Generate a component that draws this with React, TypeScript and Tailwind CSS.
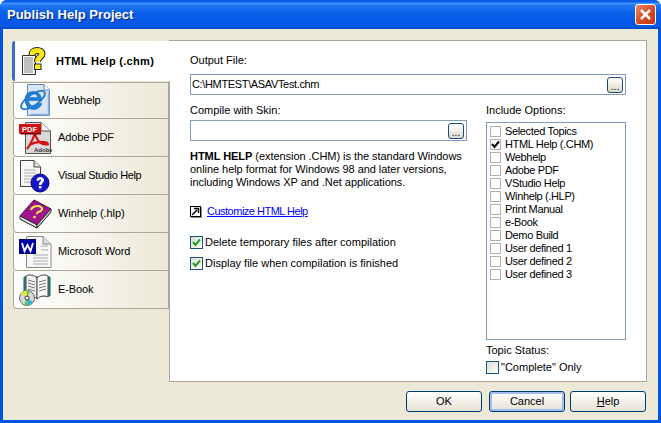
import React from "react";

const HtmlIcon = () => (
  <svg width="32" height="32" viewBox="0 0 32 32">
    <path d="M0.500 10.500H13.500V29.500H0.500Z" fill="#f6f6f6" stroke="#333" />
    <path d="M2 13h9M2 15h9M2 17h9M2 19h9M2 21h9M2 23h9M2 25h9M2 27h9" stroke="#888" strokeWidth="1" />
    <path d="M10 10C10 7 12 5.500 15 5.500C18 5.500 20 6.800 20 9C20 12 15.500 12 15.500 17" fill="none" stroke="#222" strokeWidth="7" />
    <rect x="12.500" y="19" width="6.500" height="5.500" fill="#ffe81a" stroke="#222" strokeWidth="1" />
    <path d="M10 10C10 7 12 5.500 15 5.500C18 5.500 20 6.800 20 9C20 12 15.500 12 15.500 17" fill="none" stroke="#ffe81a" strokeWidth="5" />
  </svg>
);

const IeIcon = () => (
  <svg width="32" height="33" viewBox="0 0 32 33">
    <path d="M8.500 0.500H25L30.500 6V31.500H8.500Z" fill="#d7e6f7" stroke="#5f86b8" />
    <path d="M25 0.500V6H30.500" fill="#fff" stroke="#5f86b8" />
    <path d="M29.500 8V30.500H11" fill="none" stroke="#8fb0dc" strokeWidth="1.500" />
    <ellipse cx="14" cy="16" rx="14" ry="5.500" fill="none" stroke="#2e80d0" strokeWidth="2" transform="rotate(-35 14 16)" />
    <path d="M6 15.500C6 10 10 7.500 14.500 7.500C19 7.500 22.500 10.500 22.500 16.500H9.500C9.800 20 12 22 15 22C17 22 18.500 21 19.500 19.500H23C21.500 23 18.500 25.500 14.500 25.500C9.500 25.500 6 21.500 6 15.500ZM9.700 13.500H18.800C18.300 11 16.800 9.800 14.500 9.800C12 9.800 10.200 11.200 9.700 13.500Z" fill="#1f7fd6" fillRule="evenodd" stroke="#0f5fb0" strokeWidth="0.500" />
  </svg>
);

const PdfIcon = () => (
  <svg width="34" height="32" viewBox="0 0 34 32">
    <path d="M7.500 0.500H23L32.500 9V31.500H7.500Z" fill="#d9d9d9" stroke="#555" />
    <path d="M23 0.500V9H32.500" fill="#f3f3f3" stroke="#555" />
    <path d="M18 8C16 14 14 21 9 27M17 11C19 20 24 24 31 22M11 23C17 20 24 19 30 21" fill="none" stroke="#d21010" strokeWidth="2" />
    <rect x="1" y="2" width="22" height="9" fill="#d40d12" />
    <path d="M1 11H23V12.500H3Z" fill="#70070a" />
    <text x="4" y="9.500" fontFamily="Liberation Sans" fontSize="7.500" fontWeight="700" fill="#fff">PDF</text>
    <text x="16" y="30" fontFamily="Liberation Sans" fontSize="6" fontWeight="700" fill="#333">Adobe</text>
  </svg>
);

const VsIcon = () => (
  <svg width="32" height="34" viewBox="0 0 32 34">
    <path d="M1.500 1.500H15L21.500 8V27.500H1.500Z" fill="#f8f8f8" stroke="#444" />
    <path d="M15 1.500V8H21.500" fill="#ddd" stroke="#444" />
    <path d="M5 11h12M5 14h12M5 17h12M5 20h10M5 23h8" stroke="#aaa" />
    <circle cx="21" cy="24" r="9" fill="#1414c8" stroke="#0a0a70" />
    <path d="M17.500 21.500C17.500 19.500 19 18 21.200 18C23.500 18 25 19.400 25 21.200C25 23.500 22.500 23.800 22.500 26H19.800C19.800 23 22 22.800 22 21.300C22 20.700 21.700 20.400 21.200 20.400C20.600 20.400 20.300 20.900 20.300 21.700Z" fill="#fff" />
    <rect x="19.800" y="27" width="2.700" height="2.500" fill="#fff" />
  </svg>
);

const BookIcon = () => (
  <svg width="33" height="30" viewBox="0 0 33 30">
    <path d="M1 20L18 29L32 13L18 6Z" fill="#f5f5f5" stroke="#333" />
    <path d="M1 17L15 1L32 10L18 26Z" fill="#a1158f" stroke="#3a0a3a" />
    <path d="M1 17L18 26V29L1 20Z" fill="#e8e8e8" stroke="#333" />
    <path d="M18 26L32 10V13L18 29Z" fill="#d8d8d8" stroke="#333" />
    <path d="M12 11C13 7 19 6 22 8C24.500 10 22 12.500 19 13L17.500 15" fill="none" stroke="#ffee44" strokeWidth="2" />
    <circle cx="15.500" cy="18" r="1.300" fill="#ffee44" />
  </svg>
);

const WordIcon = () => (
  <svg width="33" height="32" viewBox="0 0 33 32">
    <path d="M7.500 0.500H24L32 8V31.500H7.500Z" fill="#f7f7f7" stroke="#888" />
    <path d="M24 0.500V8H32" fill="#ddd" stroke="#888" />
    <path d="M22 10h7M22 14h7M14 19h15M14 22h15M14 25h15M14 28h15" stroke="#aaa" />
    <rect x="0.500" y="3.500" width="16" height="14" fill="#0000a8" stroke="#00006a" strokeWidth="1" />
    <path d="M3 7L5.500 15L8.500 9L11.500 15L14 7" fill="none" stroke="#fff" strokeWidth="1.800" />
  </svg>
);

const EbookIcon = () => (
  <svg width="33" height="33" viewBox="0 0 33 33">
    <path d="M5 4H31V23H5Z" fill="#3a8a8a" stroke="#205a5a" />
    <path d="M7 3C11 1 15 2 18 5V26C15 23 11 22 7 24Z" fill="#f1f1f1" stroke="#444" />
    <path d="M18 5C21 2 25 1 29 3V24C25 22 21 23 18 26Z" fill="#fafafa" stroke="#444" />
    <path d="M9 7l7 2M9 10l7 2M9 13l7 2M9 16l7 2M20 9l7-2M20 12l7-2M20 15l7-2M20 18l7-2" stroke="#777" />
    <circle cx="8" cy="25" r="7.500" fill="#d9d9d9" stroke="#666" />
    <path d="M8 25L2 21A7.500 7.500 0 0 1 8 17.500Z" fill="#e8e83c" />
    <path d="M8 25L14 29A7.500 7.500 0 0 1 9 32.500Z" fill="#29b6d8" />
    <path d="M8 25L8 17.500A7.500 7.500 0 0 1 11 18Z" fill="#58c858" />
    <path d="M8 25L9 32.500L5 32Z" fill="#58c858" />
    <circle cx="8" cy="25" r="2" fill="#fff" stroke="#333" />
  </svg>
);

const tabs = [
  { name: "Webhelp", icon: <IeIcon />, h: "h-[36px]", t: "tracking-[-0.1px]" },
  { name: "Adobe PDF", icon: <PdfIcon />, h: "h-[38px]", t: "tracking-[-0.1px]" },
  { name: "Visual Studio Help", icon: <VsIcon />, h: "h-[38px]", t: "tracking-[-0.35px]" },
  { name: "Winhelp (.hlp)", icon: <BookIcon />, h: "h-[38px]", t: "tracking-[-0.1px]" },
  { name: "Microsoft Word", icon: <WordIcon />, h: "h-[38px]", t: "tracking-[-0.1px]" },
  { name: "E-Book", icon: <EbookIcon />, h: "h-[38px]", t: "tracking-[-0.1px]" },
];

const options = [
  "Selected Topics",
  "HTML Help (.CHM)",
  "Webhelp",
  "Adobe PDF",
  "VStudio Help",
  "Winhelp (.HLP)",
  "Print Manual",
  "e-Book",
  "Demo Build",
  "User defined 1",
  "User defined 2",
  "User defined 3",
];

const Browse = () => (
  <div className="w-[16px] h-[16px] rounded-[3px] border border-[#1c4a7c] bg-gradient-to-b from-white to-[#dcd8c8] flex items-end justify-center text-[10px] leading-[11px] text-black shrink-0">
    ...
  </div>
);

const XpCheck = ({ label }: { label: string }) => (
  <div className="flex items-center gap-[2px] h-[13px]">
    <div className="w-[13px] h-[13px] border border-[#1c5180] bg-gradient-to-br from-[#dcdcd4] to-white flex items-center justify-center shrink-0">
      <svg width="9" height="9" viewBox="0 0 9 9">
        <path d="M1 4L3.500 7L8 1.500" fill="none" stroke="#21a121" strokeWidth="2" />
      </svg>
    </div>
    <span>{label}</span>
  </div>
);

const XpButton = ({ children, wide, def }: { children: React.ReactNode; wide: string; def?: boolean }) => (
  <div
    className={`${wide} h-[21px] rounded-[3px] border border-[#003c74] bg-gradient-to-b from-white to-[#e6e2d4] flex items-center justify-center ${
      def ? "shadow-[inset_0_0_0_2px_#a4bdec]" : ""
    }`}
  >
    {children}
  </div>
);

export default function App() {
  return (
    <div className="w-[661px] h-[423px] overflow-hidden bg-[#0054e3] rounded-t-[7px] flex flex-col font-['Liberation_Sans',sans-serif] text-[11px] leading-[13px] text-black">
      <div className="h-[29px] shrink-0 pl-[7px] pr-[5px] flex items-center justify-between bg-[linear-gradient(180deg,#0a5ae0_0%,#0a5ff0_6%,#3f94fb_12%,#1f74f4_20%,#0a5fe8_45%,#0558e6_80%,#0a5ae8_90%,#0048c8_100%)]">
        <span className="text-white font-bold text-[13px] [text-shadow:1px_1px_#0a2a80] -mt-[1px]">Publish Help Project</span>
        <div className="w-[21px] h-[21px] rounded-[3px] border border-white bg-[linear-gradient(135deg,#eb8a6a,#d6491f_55%,#c03a18)] flex items-center justify-center">
          <svg width="13" height="13" viewBox="0 0 13 13">
            <path d="M2 2L11 11M11 2L2 11" stroke="#fff" strokeWidth="2.500" />
          </svg>
        </div>
      </div>

      <div className="flex-1 mx-[3px] mb-[3px] bg-[#ece9d8] flex flex-col min-h-0">
        <div className="flex pl-[9px] pr-[12px] pt-[11px]">
          <div className="w-[158px] shrink-0 relative z-10 -mr-[1px] pt-[1px]">
            <div className="h-[40px] bg-white border-l-[3px] border-[#3a6cc0] rounded-l-[3px] flex items-center pl-[6px]">
              <div className="w-[33px] flex justify-center"><HtmlIcon /></div>
              <span className="font-bold ml-[2px] tracking-[0.3px]">HTML Help (.chm)</span>
            </div>
            <div className="border-r border-[#aca899] h-[1px]" />
            <div className="w-[157px] border-t border-[#aca899]">
              {tabs.map((t) => (
                <div
                  key={t.name}
                  className={`${t.h} ml-[1px] border-l border-b border-r border-[#aca899] rounded-bl-[4px] bg-gradient-to-r from-white to-[#ece9d8] flex items-center pl-[4px]`}
                >
                  <div className="w-[34px] flex justify-center shrink-0">{t.icon}</div>
                  <span className={`ml-[6px] ${t.t}`}>{t.name}</span>
                </div>
              ))}
            </div>
          </div>

          <div className="w-[478px] h-[342px] bg-white border border-[#aca899] pl-[20px] pr-[20px] flex flex-col shrink-0">
            <div className="pt-[13px] h-[33px]">Output File:</div>
            <div className="h-[21px] border border-[#7f9db9] flex items-center justify-between pl-[1px] pr-[2px]">
              <span className="tracking-[-0.35px]">C:\HMTEST\ASAVTest.chm</span>
              <Browse />
            </div>
            <div className="flex mt-[9px]">
              <div className="w-[277px] shrink-0">
                <div className="h-[16px]">Compile with Skin:</div>
                <div className="h-[21px] border border-[#7f9db9] flex items-center justify-end pr-[2px]">
                  <Browse />
                </div>
                <p className="mt-[9px] w-[280px] leading-[13px] tracking-[-0.05px]">
                  <b>HTML HELP</b> (extension .CHM) is the standard Windows online help format for Windows 98 and later versions, including Windows XP and .Net applications.
                </p>
                <div className="flex items-center gap-[6px] mt-[16px]">
                  <div className="w-[11px] h-[11px] border border-black bg-white flex items-center justify-center shadow-[1px_1px_0_#888]">
                    <svg width="9" height="9" viewBox="0 0 9 9">
                      <path d="M1 8L6 3M3 1.500H7.500V6" fill="none" stroke="#000" strokeWidth="1.500" />
                    </svg>
                  </div>
                  <span className="text-[#0000ff] underline tracking-[-0.5px]">Customize HTML Help</span>
                </div>
                <div className="mt-[18px]"><XpCheck label="Delete temporary files after compilation" /></div>
                <div className="mt-[8px]"><XpCheck label="Display file when compilation is finished" /></div>
              </div>
              <div className="ml-[19px] w-[140px] shrink-0">
                <div className="h-[12px]">Include Options:</div>
                <div className="h-[218px] mt-[6px] border border-[#7f9db9] pt-[2px] pl-[3px]">
                  {options.map((o, i) => (
                    <div key={o} className="h-[13px] flex items-center gap-[4px]">
                      <div className="w-[11px] h-[11px] border border-[#b0b0b0] flex items-center justify-center shrink-0">
                        {i === 1 && (
                          <svg width="9" height="9" viewBox="0 0 9 9">
                            <path d="M1 4L3.500 7L8 1.500" fill="none" stroke="#000" strokeWidth="2" />
                          </svg>
                        )}
                      </div>
                      <span className="tracking-[-0.35px]">{o}</span>
                    </div>
                  ))}
                </div>
                <div className="mt-[4px]">Topic Status:</div>
                <div className="flex items-center gap-[2px] mt-[4px]">
                  <div className="w-[13px] h-[13px] border border-[#1c5180] bg-gradient-to-br from-[#dcdcd4] to-white" />
                  <span>"Complete" Only</span>
                </div>
              </div>
            </div>
          </div>
        </div>
        <div className="flex justify-end pr-[12px] mt-[9px]">
          <XpButton wide="w-[76px] mr-[7px]">OK</XpButton>
          <XpButton wide="w-[76px] mr-[5px]" def>Cancel</XpButton>
          <XpButton wide="w-[76px]"><span><u>H</u>elp</span></XpButton>
        </div>
      </div>
    </div>
  );
}
